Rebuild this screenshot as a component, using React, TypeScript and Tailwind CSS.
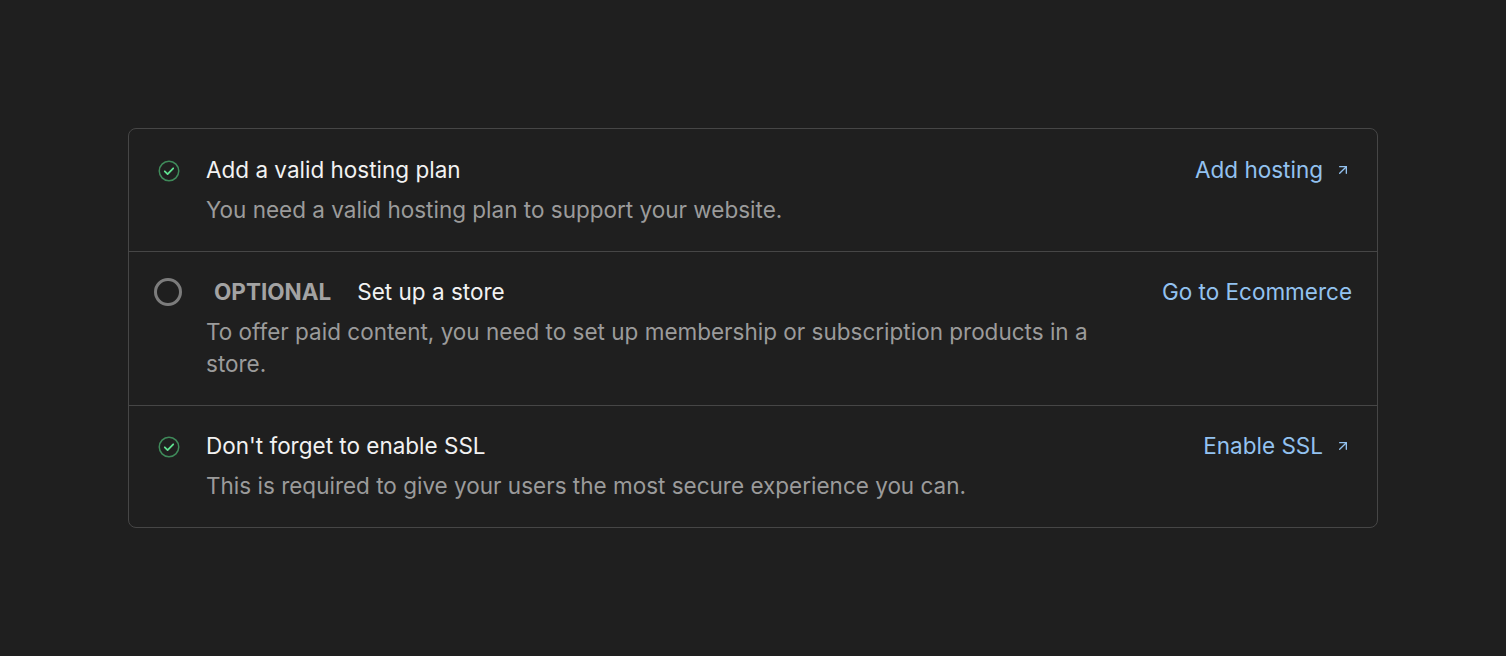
import { ArrowUpRight } from "lucide-react";

type Item = {
  title: string;
  description: string;
  link: string;
  external: boolean;
  done: boolean;
  optional?: boolean;
};

const items: Item[] = [
  {
    title: "Add a valid hosting plan",
    description: "You need a valid hosting plan to support your website.",
    link: "Add hosting",
    external: true,
    done: true,
  },
  {
    title: "Set up a store",
    description:
      "To offer paid content, you need to set up membership or subscription products in a store.",
    link: "Go to Ecommerce",
    external: false,
    done: false,
    optional: true,
  },
  {
    title: "Don't forget to enable SSL",
    description: "This is required to give your users the most secure experience you can.",
    link: "Enable SSL",
    external: true,
    done: true,
  },
];

function StatusIcon({ done }: { done: boolean }) {
  if (done) {
    return (
      <svg width="22" height="22" viewBox="0 0 22 22" fill="none" className="translate-x-[1px] translate-y-[1px]">
        <circle cx="11" cy="11" r="9.75" stroke="#3f8a5a" strokeWidth="1.5" />
        <path
          d="M6.8 11.3l2.8 2.8 5.6-5.8"
          stroke="#5fe08f"
          strokeWidth="1.8"
          strokeLinecap="round"
          strokeLinejoin="round"
        />
      </svg>
    );
  }
  return <div className="h-[28px] w-[28px] rounded-full border-[3px] border-[#7c7c7c]" />;
}

export default function App() {
  return (
    <div className="min-h-screen bg-[#1f1f1f] px-[128px] pt-[128px] font-['Inter','Noto_Sans',sans-serif]">
      <div className="overflow-hidden rounded-lg border border-[#464646]">
        {items.map((item, i) => (
          <div
            key={item.title}
            className={`flex gap-12 pb-[25px] pl-[25px] pr-[25px] ${i > 0 ? "border-t border-[#464646] pt-6" : "pt-[25px]"}`}
          >
            <div className="flex flex-1 gap-6">
              <div className="flex h-8 w-7 shrink-0 items-center justify-center">
                <StatusIcon done={item.done} />
              </div>
              <div className="flex flex-col gap-2">
                <div className="flex items-center text-[22.5px] leading-8 text-[#f2f2f2]">
                  {item.optional ? (
                    <span className="mr-[18px] px-2 text-[22.5px] font-bold text-[#a3a3a3]">
                      OPTIONAL
                    </span>
                  ) : null}
                  {item.title}
                </div>
                <p className="text-[22.5px] leading-8 text-[#9b9b9b]">{item.description}</p>
              </div>
            </div>
            <a className="flex h-8 shrink-0 items-center gap-3 text-[22.5px] text-[#93c2f0]">
              {item.link}
              {item.external ? (
                <ArrowUpRight size={16} strokeWidth={2} className="mr-[1px]" />
              ) : null}
            </a>
          </div>
        ))}
      </div>
    </div>
  );
}
